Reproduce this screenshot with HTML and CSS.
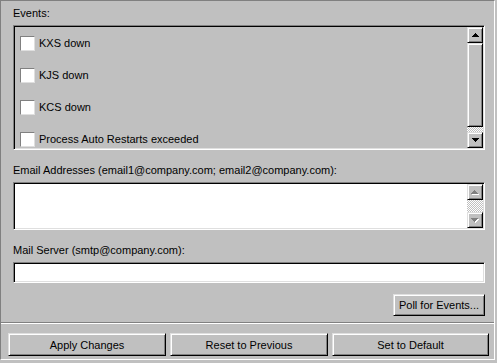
FILE: index.html
```html
<!DOCTYPE html>
<html>
<head>
  <title>Event Notification</title>
  <link rel="stylesheet" href="styles.css">
</head>
<body>
  <div class="window">
    <div class="panel">
      <div class="label">Events:</div>
      <div class="listbox sunken">
        <div class="items">
          <div class="item"><span class="check"></span>KXS down</div>
          <div class="item"><span class="check"></span>KJS down</div>
          <div class="item"><span class="check"></span>KCS down</div>
          <div class="item"><span class="check"></span>Process Auto Restarts exceeded</div>
        </div>
        <div class="vscroll">
          <div class="sbtn">
            <svg width="7" height="4" class="arrow"><path d="M3 0h1v1h1v1h1v1h1v1H0V3h1V2h1V1h1z"/></svg>
          </div>
          <div class="thumb"></div>
          <div class="track"></div>
          <div class="sbtn">
            <svg width="7" height="4" class="arrow"><path d="M0 0h7v1H6v1H5v1H4v1H3V3H2V2H1V1H0z"/></svg>
          </div>
        </div>
      </div>

      <div class="label spaced">Email Addresses (email1@company.com; email2@company.com):</div>
      <div class="textarea sunken">
        <div class="field"></div>
        <div class="vscroll">
          <div class="sbtn">
            <svg width="8" height="5" class="arrow">
              <path fill="#fff" transform="translate(1 1)" d="M3 0h1v1h1v1h1v1h1v1H0V3h1V2h1V1h1z"/>
              <path fill="#808080" d="M3 0h1v1h1v1h1v1h1v1H0V3h1V2h1V1h1z"/>
            </svg>
          </div>
          <div class="track"></div>
          <div class="sbtn">
            <svg width="8" height="5" class="arrow">
              <path fill="#fff" transform="translate(1 1)" d="M0 0h7v1H6v1H5v1H4v1H3V3H2V2H1V1H0z"/>
              <path fill="#808080" d="M0 0h7v1H6v1H5v1H4v1H3V3H2V2H1V1H0z"/>
            </svg>
          </div>
        </div>
      </div>

      <div class="label spaced">Mail Server (smtp@company.com):</div>
      <div class="input sunken"></div>

      <div class="actions">
        <button class="btn poll">Poll for Events...</button>
      </div>
    </div>

    <div class="buttonbar">
      <button class="btn wide">Apply Changes</button>
      <button class="btn wide">Reset to Previous</button>
      <button class="btn wide last">Set to Default</button>
    </div>
  </div>
</body>
</html>
```

FILE: styles.css
```css
body {
    margin: 0;
    background: #c0c0c0;
    font: 11px "Liberation Sans", Arial, sans-serif;
    color: #000;
}

.window {
    width: 495px;
    height: 360px;
    box-sizing: border-box;
    border-left: 1px solid #808080;
    border-top: 1px solid #808080;
    border-right: 1px solid #fff;
    border-bottom: 1px solid #fff;
}

.panel {
    padding: 6px 9px 6px 12px;
    border-bottom: 1px solid #808080;
}

.label {
    line-height: 13px;
    height: 13px;
    margin-bottom: 5px;
    white-space: nowrap;
}

.label.spaced {
    margin-top: 14px;
}

/* classic sunken edge */
.sunken {
    box-sizing: border-box;
    border: 1px solid;
    border-color: #808080 #fff #fff #808080;
    box-shadow: inset 1px 1px #000, inset -1px -1px #dfdfdf;
    padding: 1px;
}

.listbox {
    display: flex;
    height: 125px;
    overflow: hidden;
}

.items {
    flex: 1;
    padding-left: 5px;
    overflow: hidden;
}

.item {
    height: 32px;
    display: flex;
    align-items: center;
    white-space: nowrap;
}

.check {
    width: 13px;
    height: 13px;
    background: #fff;
    border: 1px solid;
    border-color: #808080 #dfdfdf #dfdfdf #808080;
    margin-right: 4px;
    flex: none;
}

.vscroll {
    width: 16px;
    display: flex;
    flex-direction: column;
    flex: none;
}

.sbtn, .thumb, .btn {
    box-sizing: border-box;
    background: #c0c0c0;
    border: 1px solid;
    border-color: #dfdfdf #000 #000 #dfdfdf;
    box-shadow: inset 1px 1px #fff, inset -1px -1px #808080;
}

.sbtn {
    height: 16px;
    flex: none;
    display: flex;
    align-items: center;
    justify-content: center;
}

.arrow {
    display: block;
    shape-rendering: crispEdges;
}

.thumb {
    height: 84px;
    flex: none;
}

.track {
    flex: 1;
    background: repeating-conic-gradient(#fff 0 25%, #c0c0c0 0 50%) 0 0 / 2px 2px;
}

.textarea {
    display: flex;
    height: 48px;
    background: #fff;
}

.field {
    flex: 1;
}

.input {
    height: 21px;
    background: #fff;
}

.actions {
    display: flex;
    justify-content: flex-end;
    margin-top: 11px;
}

.btn {
    font: inherit;
    color: #000;
    padding: 0;
    margin: 0;
    text-align: center;
}

.poll {
    width: 92px;
    height: 22px;
}

.buttonbar {
    border-top: 1px solid #fff;
    padding: 9px 0 0 7px;
    display: flex;
    gap: 4px;
}

.wide {
    width: 158px;
    height: 23px;
}

.wide.last {
    width: 157px;
}
```
